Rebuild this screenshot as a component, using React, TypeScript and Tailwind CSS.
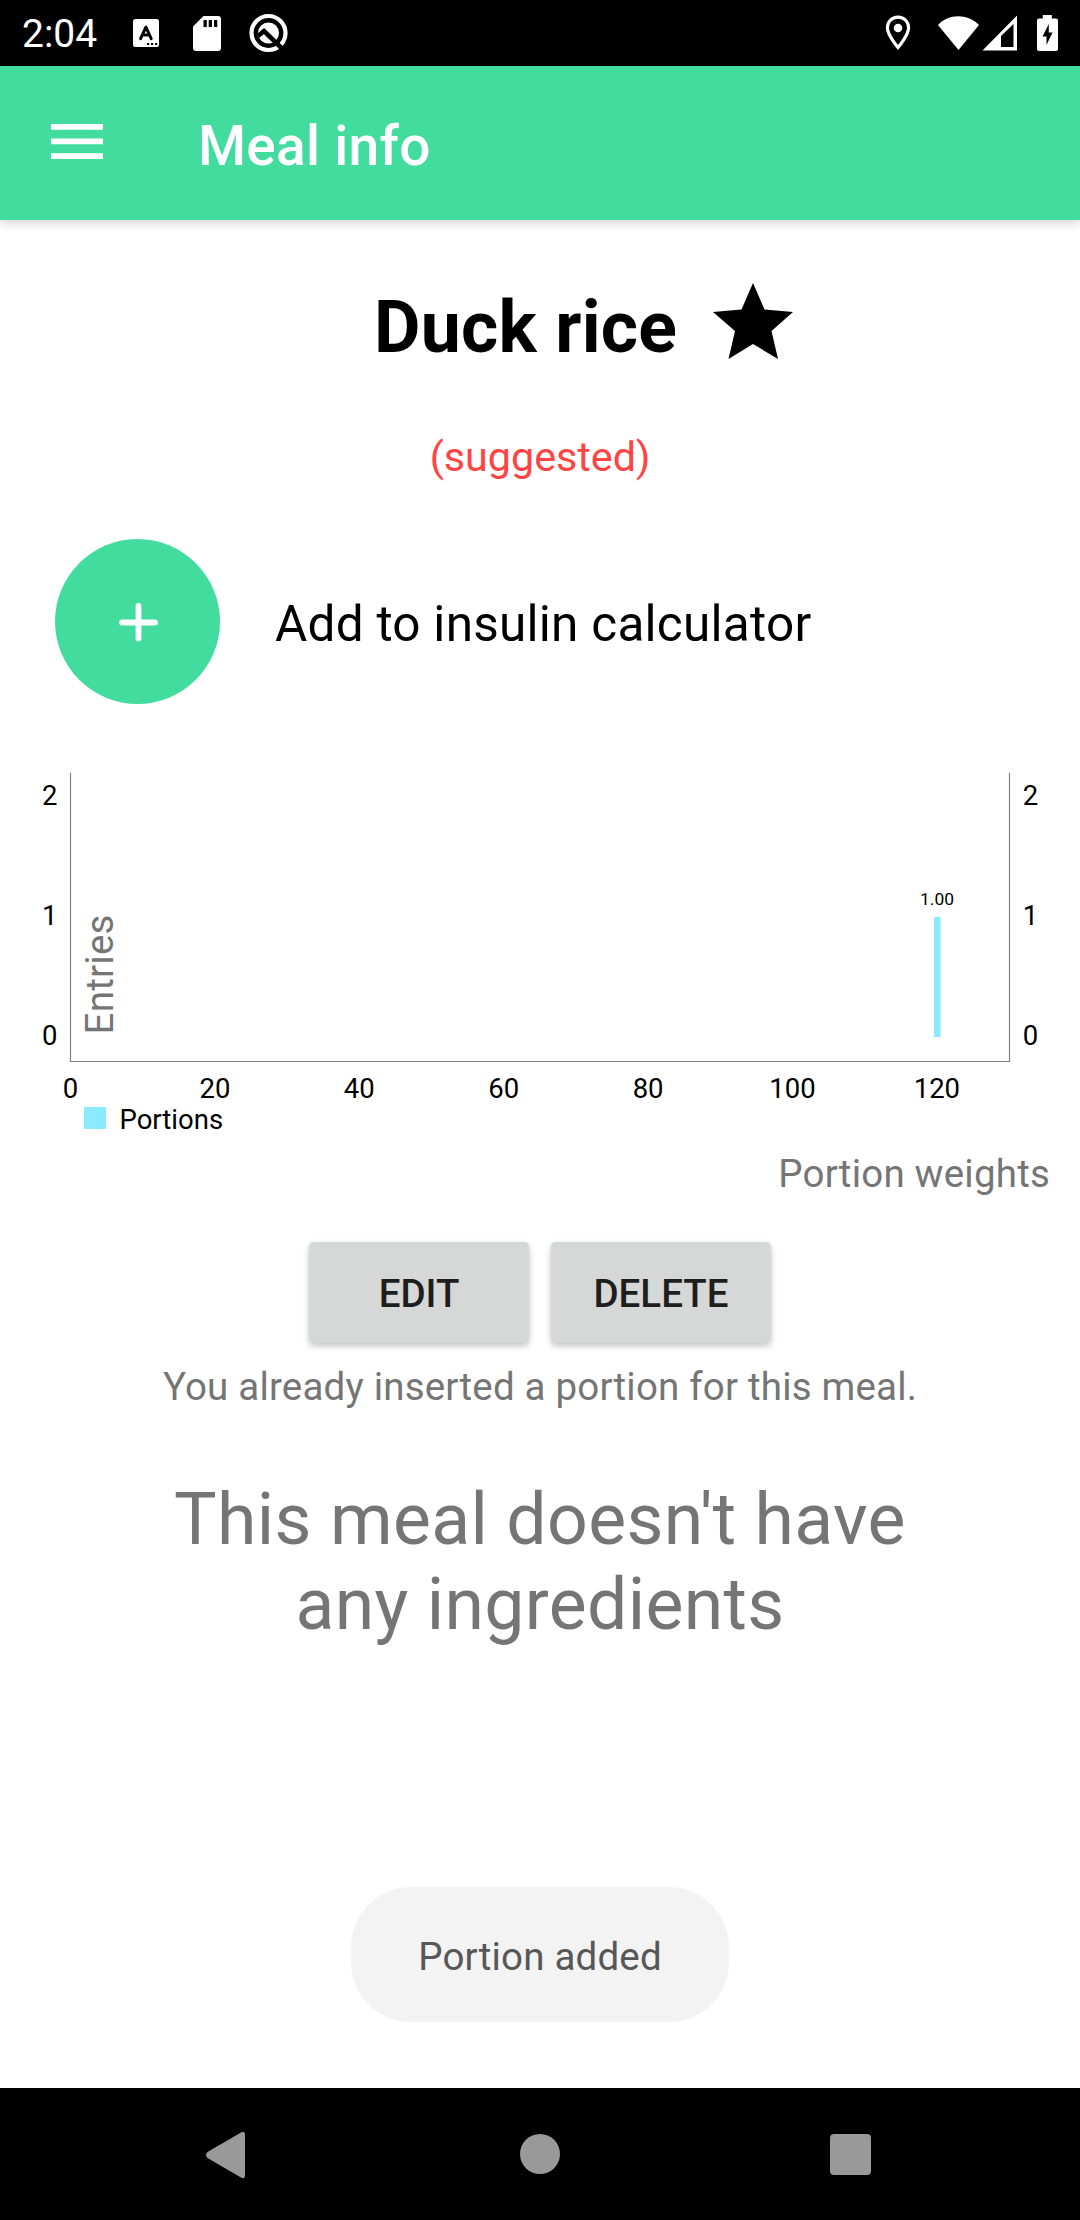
const xTicks = [0, 20, 40, 60, 80, 100, 120];
const yTicks = [0, 1, 2];
const axisX = (v: number) => 70.5 + v * 7.22;
const axisY = (v: number) => 277 - v * 120;

function StatusBar() {
  return (
    <header className="flex h-[66px] items-center bg-black pl-[22px] text-white">
      <span className="w-[111px] pt-[2px] text-[39px] leading-[66px]">2:04</span>
      <svg className="h-[28px] w-[26px]" viewBox="0 0 26 28">
        <rect width="26" height="28" rx="2.5" fill="#fff" />
        <path d="M7.6 19.6 12.9 8.2 18.2 19.6M9.4 16h7" fill="none" stroke="#000" strokeWidth="3" strokeLinejoin="round" strokeLinecap="round" />
        <path d="M14 24h2.2v2H14zm4 0h2.2v2H18zm4 0h2.2v2H22z" fill="#000" />
      </svg>
      <svg className="ml-[34px] h-[35px] w-[28px]" viewBox="0 0 28 35">
        <path d="M10.500 0H25a3 3 0 0 1 3 3v29a3 3 0 0 1-3 3H3a3 3 0 0 1-3-3V10.500z" fill="#fff" />
        <path d="M10.500 4h3.300v7h-3.300zm5.200 0H19v7h-3.300zm5.300 0h3.300v7H21z" fill="#000" />
      </svg>
      <svg className="ml-[28px] h-[40px] w-[40px]" viewBox="0 0 40 40">
        <circle cx="19.500" cy="20" r="17" fill="none" stroke="#fff" strokeWidth="4.200" />
        <circle cx="19.500" cy="20" r="10.500" fill="#fff" />
        <path d="M9 23 15 18 33 35.500" fill="none" stroke="#000" strokeWidth="4.600" />
      </svg>
      <svg className="ml-auto h-[36px] w-[26px]" viewBox="0 0 26 36">
        <path
          d="M13 2.200C6.800 2.200 2.400 6.800 2.400 12.800 2.400 20 13 32.500 13 32.500S23.600 20 23.600 12.800C23.600 6.800 19.200 2.200 13 2.200z"
          fill="none"
          stroke="#fff"
          strokeWidth="3.200"
        />
        <circle cx="13" cy="13" r="4.300" fill="#fff" />
      </svg>
      <svg className="ml-[25px] h-[36px] w-[82px]" viewBox="0 0 82 36">
        <path d="M2 10C12-1.600 32-1.600 43 10L22.500 35z" fill="#fff" />
        <path d="M46.500 35.500 81 .500v35zM65 32h12.500V9L65 21z" fill="#fff" fillRule="evenodd" />
      </svg>
      <svg className="mr-[22px] ml-[18px] h-[36px] w-[22px]" viewBox="0 0 22 36">
        <path d="M6.800 0h9v3.500H20a2 2 0 0 1 2 2V34a2 2 0 0 1-2 2H3a2 2 0 0 1-2-2V5.500a2 2 0 0 1 2-2h3.800z" fill="#fff" />
        <path d="M12.800 9 6.500 21.500h4V30l6-12.500h-3.700z" fill="#000" />
      </svg>
    </header>
  );
}

function AppBar() {
  return (
    <div className="relative flex h-[154px] bg-[#42dc9f] text-white shadow-[0_3px_10px_rgba(0,0,0,0.18)]">
      <svg className="mt-[57px] ml-[51px] h-[37px] w-[52px]" viewBox="0 0 52 37">
        <path d="M0 1h52v5.700H0zM0 15.500h52v5.700H0zM0 30.200h52v5.700H0z" fill="#fff" />
      </svg>
      <h1 className="ml-[95px] pt-[3px] text-[55px] leading-[154px] font-medium tracking-[0.005em]">Meal info</h1>
    </div>
  );
}

function PortionChart() {
  return (
    <svg className="h-[440px] w-[1080px]" viewBox="0 0 1080 440" fontSize="27.5">
      <path d="M70.500 13V301.500H1009.500V13" fill="none" stroke="#808080" strokeWidth="1.200" />
      {yTicks.map((t) => (
        <g key={t}>
          <text x="57.500" y={axisY(t) + 8.200} textAnchor="end">{t}</text>
          <text x="1022.800" y={axisY(t) + 8.200}>{t}</text>
        </g>
      ))}
      {xTicks.map((t) => (
        <text key={t} x={axisX(t)} y="337.700" textAnchor="middle">{t}</text>
      ))}
      <rect x="934" y={axisY(1)} width="6.500" height="120" fill="#8ceaff" />
      <text x="937" y="145" fontSize="17.400" textAnchor="middle">1.00</text>
      <rect x="84" y="347" width="22" height="22" fill="#8ceaff" />
      <text x="119.500" y="368.700">Portions</text>
      <text transform="translate(113 274.500) rotate(-90)" fontSize="38.500" fill="#757575" letterSpacing="0.250">Entries</text>
      <text x="1050" y="427" fontSize="38.500" fill="#757575" textAnchor="end" letterSpacing="0.200">Portion weights</text>
    </svg>
  );
}

function ActionButton({ label }: { label: string }) {
  return (
    <button className="h-[101px] w-[220px] rounded-[5px] bg-[#d6d7d7] pt-[3px] text-[38.5px] font-medium text-[#1e1e1e] shadow-[0_3px_6px_rgba(0,0,0,0.24)]">
      {label}
    </button>
  );
}

function NavBar() {
  return (
    <nav className="flex h-[132px] items-start bg-black pt-[43px]">
      <svg className="ml-[206px] h-[48px] w-[40px]" viewBox="0 0 40 48">
        <path d="M1.500 21 35 1.500q4-2 4 2v41q0 4-4 2L1.500 27q-3-3 0-6z" fill="#999" />
      </svg>
      <div className="mt-[3px] ml-[274px] size-[40px] rounded-full bg-[#999]" />
      <div className="mt-[3px] ml-[270px] size-[41px] rounded-[4px] bg-[#999]" />
    </nav>
  );
}

export default function App() {
  return (
    <div className="flex h-[2220px] w-[1080px] flex-col overflow-hidden bg-white font-['Roboto',sans-serif] text-black">
      <StatusBar />
      <AppBar />
      <main className="flex flex-1 flex-col">
        <div className="flex h-[188px] pl-[374px]">
          <h2 className="w-[339px] pt-[58px] text-[71.5px] leading-[100px] font-bold tracking-[0.004em]">Duck rice</h2>
          <svg className="mt-[63px] h-[76px] w-[80px]" viewBox="0 0 80 76">
            <path d="M40 0 51.500 26.500 80 29 58.500 48 65 76 40 61 15.500 76 22 48 0 29 28.500 26.500z" />
          </svg>
        </div>
        <p className="h-[131px] pt-[19px] text-center text-[41.25px] leading-[60px] text-[#ff4444]">(suggested)</p>
        <div className="flex h-[221px] items-start pl-[55px]">
          <button className="flex size-[165px] items-center justify-center rounded-full bg-[#42dc9f]">
            <svg className="size-[40px]" viewBox="0 0 40 40">
              <path d="M20.500 4v32.500M4 20.500h33" stroke="#fff" strokeWidth="5.800" strokeLinecap="round" />
            </svg>
          </button>
          <span className="pl-[55px] text-[49.5px] leading-[170px] tracking-[0.005em]">Add to insulin calculator</span>
        </div>
        <PortionChart />
        <div className="flex h-[157px] justify-center gap-[22px] pt-[42px]">
          <ActionButton label="EDIT" />
          <ActionButton label="DELETE" />
        </div>
        <p className="text-center text-[38.5px] leading-[60px] tracking-[0.005em] text-[#757575]">
          You already inserted a portion for this meal.
        </p>
        <p className="mx-auto mt-[60px] w-[800px] text-center text-[71.5px] leading-[85px] tracking-[0.005em] text-[#757575]">
          This meal doesn't have any ingredients
        </p>
        <div className="mx-auto mt-auto mb-[66px] flex h-[135px] w-[378px] items-center justify-center rounded-[60px] bg-[#f3f3f3] pt-[4px] text-[38.5px] tracking-[0.005em] text-[#575757]">
          Portion added
        </div>
      </main>
      <NavBar />
    </div>
  );
}
